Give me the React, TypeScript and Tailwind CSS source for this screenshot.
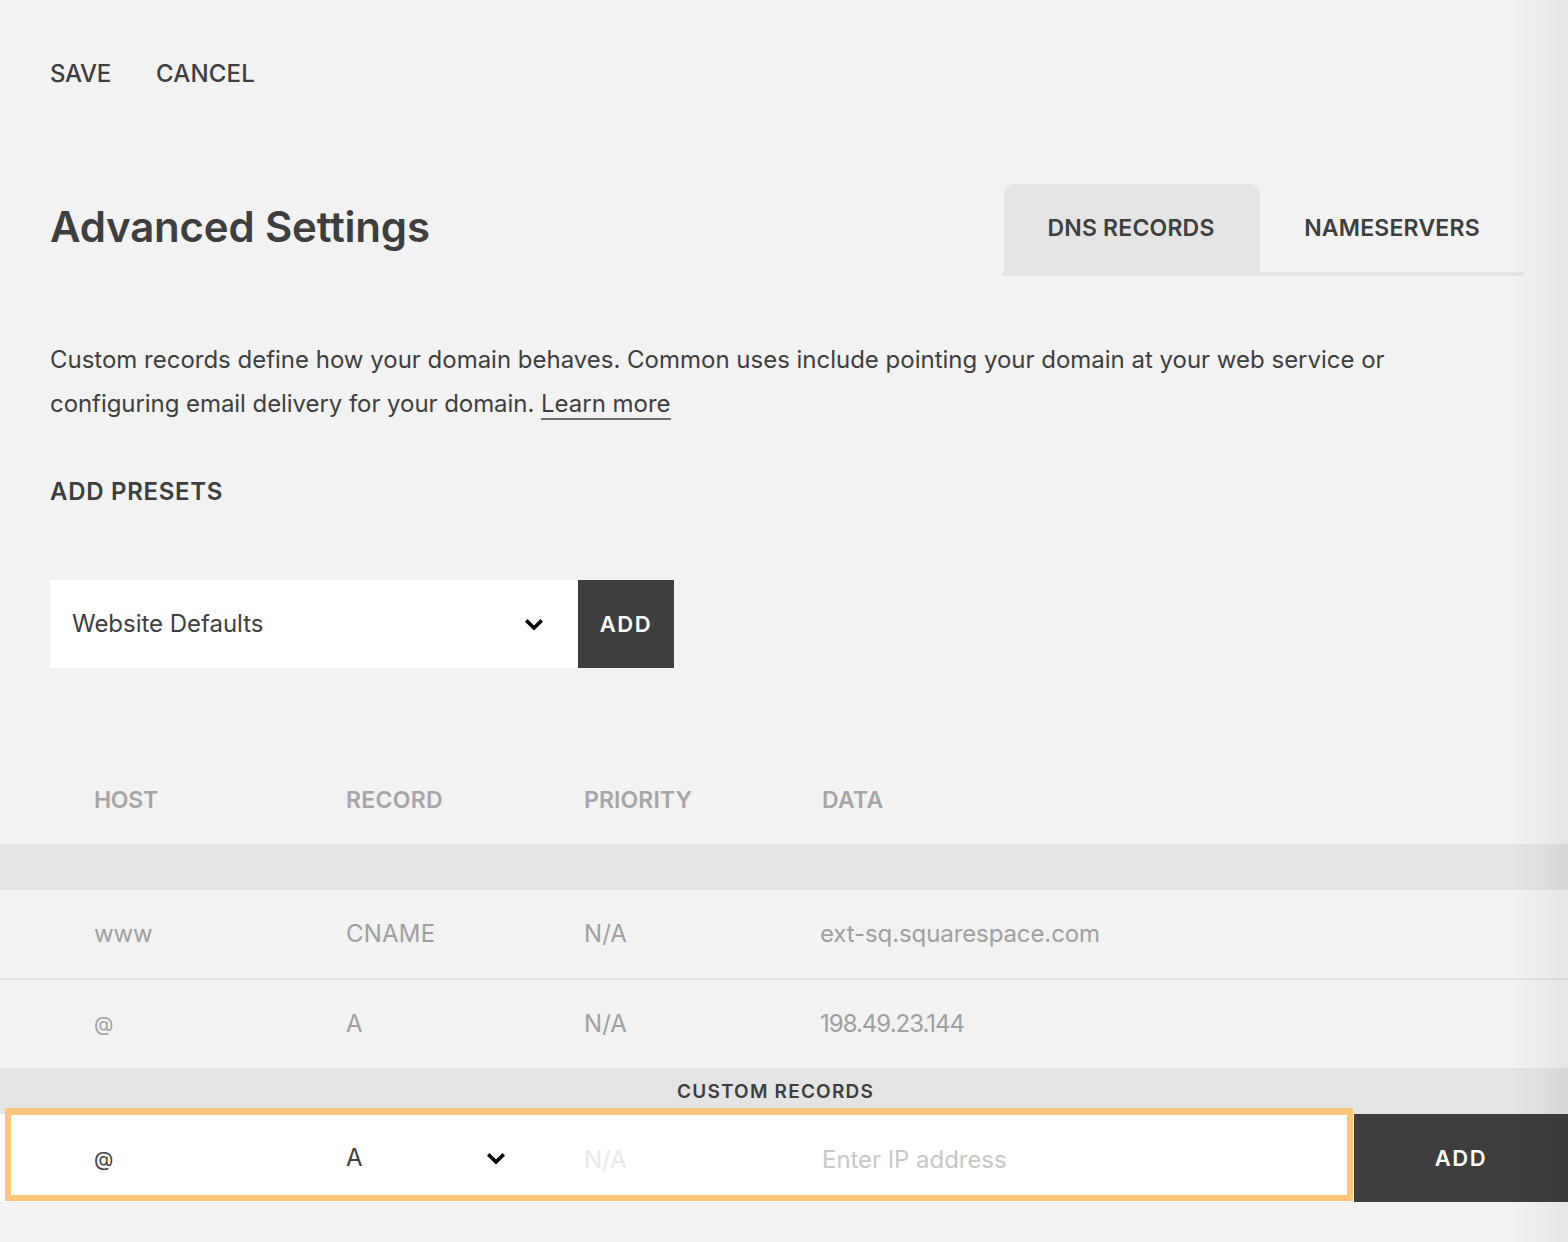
import React from "react";

function Chevron({ className }: { className: string }) {
  return (
    <svg viewBox="0 0 18 13" className={className} fill="none">
      <path d="M1.2 2.4 9 10l7.8-7.6" stroke="#000" strokeWidth="3.6" />
    </svg>
  );
}

export default function App() {
  return (
    <div className="relative h-[1242px] overflow-hidden bg-[#f2f2f2] text-[#3e3e3e] font-['Inter','Liberation_Sans',sans-serif]">
      <div className="h-[148px] pl-[50px] pt-[56px] flex items-start gap-[45px] text-[24px] leading-[36px] font-medium">
        <span className="tracking-[-0.3px]">SAVE</span>
        <span className="tracking-[0.2px]">CANCEL</span>
      </div>

      <div className="h-[128px] pl-[50px] pr-[44px] pt-[36px] flex justify-between items-start">
        <h1 className="text-[42px] leading-[86px] font-semibold tracking-[-0.2px]">Advanced Settings</h1>
        <div className="flex w-[522px] h-[92px] border-b-4 border-[#e4e4e4] pl-[2px] text-[23px] font-semibold tracking-[0.2px]">
          <div className="w-[256px] h-[88px] bg-[#e4e4e4] rounded-t-[10px] flex items-start justify-center pt-[27px] pr-[2px] leading-[34px]">DNS RECORDS</div>
          <div className="w-[264px] h-[88px] flex items-start justify-center pt-[27px] leading-[34px]">NAMESERVERS</div>
        </div>
      </div>

      <p className="pl-[50px] pt-[62px] text-[24px] leading-[44px] tracking-[-0.01px]">
        Custom records define how your domain behaves. Common uses include pointing your domain at your web service or
        <br />
        <span className="tracking-[-0.06px]">configuring email delivery for your domain.</span>{" "}
        <a className="border-b-2 border-[#6f6f6f]">Learn more</a>
      </p>

      <h2 className="pl-[50px] pt-[48px] text-[24px] leading-[36px] font-semibold tracking-[0.7px]">ADD PRESETS</h2>

      <div className="pl-[50px] pt-[70px] flex">
        <div className="w-[528px] h-[88px] bg-white flex items-center justify-between pl-[22px] pr-[35px] text-[24px] tracking-[-0.03px]">
          <span>Website Defaults</span>
          <Chevron className="w-[18px] h-[13px]" />
        </div>
        <div className="w-[96px] h-[88px] bg-[#3e3e3e] text-white flex items-center justify-center text-[22px] font-semibold tracking-[1.5px]">ADD</div>
      </div>

      <div className="h-[176px] pl-[94px] pt-[114px] flex text-[23px] leading-[36px] font-semibold tracking-[0.3px] text-[#a6a6a6]">
        <div className="w-[252px] tracking-[-0.3px]">HOST</div>
        <div className="w-[238px]">RECORD</div>
        <div className="w-[238px] tracking-[0.1px]">PRIORITY</div>
        <div>DATA</div>
      </div>

      <div className="h-[46px] bg-[#e4e4e4]" />

      <div className="h-[90px] pl-[94px] flex items-center border-b-2 border-[#e4e4e4] text-[24px] tracking-[-0.1px] text-[#a0a0a0]">
        <div className="w-[252px]">www</div>
        <div className="w-[238px] tracking-[0.2px]">CNAME</div>
        <div className="w-[236px] tracking-[0.1px]">N/A</div>
        <div>ext-sq.squarespace.com</div>
      </div>

      <div className="h-[88px] pl-[94px] flex items-center text-[24px] tracking-[-0.1px] text-[#a0a0a0]">
        <div className="w-[252px] text-[20px]">@</div>
        <div className="w-[238px]">A</div>
        <div className="w-[236px] tracking-[0.1px]">N/A</div>
        <div className="tracking-[-1px]">198.49.23.144</div>
      </div>

      <div className="h-[46px] bg-[#e4e4e4] flex items-start justify-center pt-[9px] pr-[17px] text-[19px] leading-[30px] font-semibold tracking-[1.2px]">CUSTOM RECORDS</div>

      <div className="relative flex h-[88px]">
        <div className="w-[1354px] bg-white pl-[94px] flex items-center text-[24px] tracking-[-0.1px]">
          <div className="w-[252px] text-[20px] pt-[1px]">@</div>
          <div className="w-[238px] flex items-center">
            <span className="w-[141px] -mt-[1px]">A</span>
            <Chevron className="w-[18px] h-[13px]" />
          </div>
          <div className="w-[238px] pt-[3px] text-[#e8e8e8]">N/A</div>
          <div className="pt-[3px] text-[#c8c8c8] tracking-[-0.05px]">Enter IP address</div>
        </div>
        <div className="flex-1 bg-[#3e3e3e] text-white flex items-center justify-center text-[22px] font-semibold tracking-[1.5px]">ADD</div>
        <div className="absolute left-[5px] top-[-6px] w-[1348px] h-[93px] border-x-[6px] border-b-[6px] border-t-[7px] border-[#fec679]" />
      </div>

      <div className="absolute top-0 right-0 w-[56px] h-full bg-gradient-to-r from-transparent to-[#0000000e] pointer-events-none" />
    </div>
  );
}
